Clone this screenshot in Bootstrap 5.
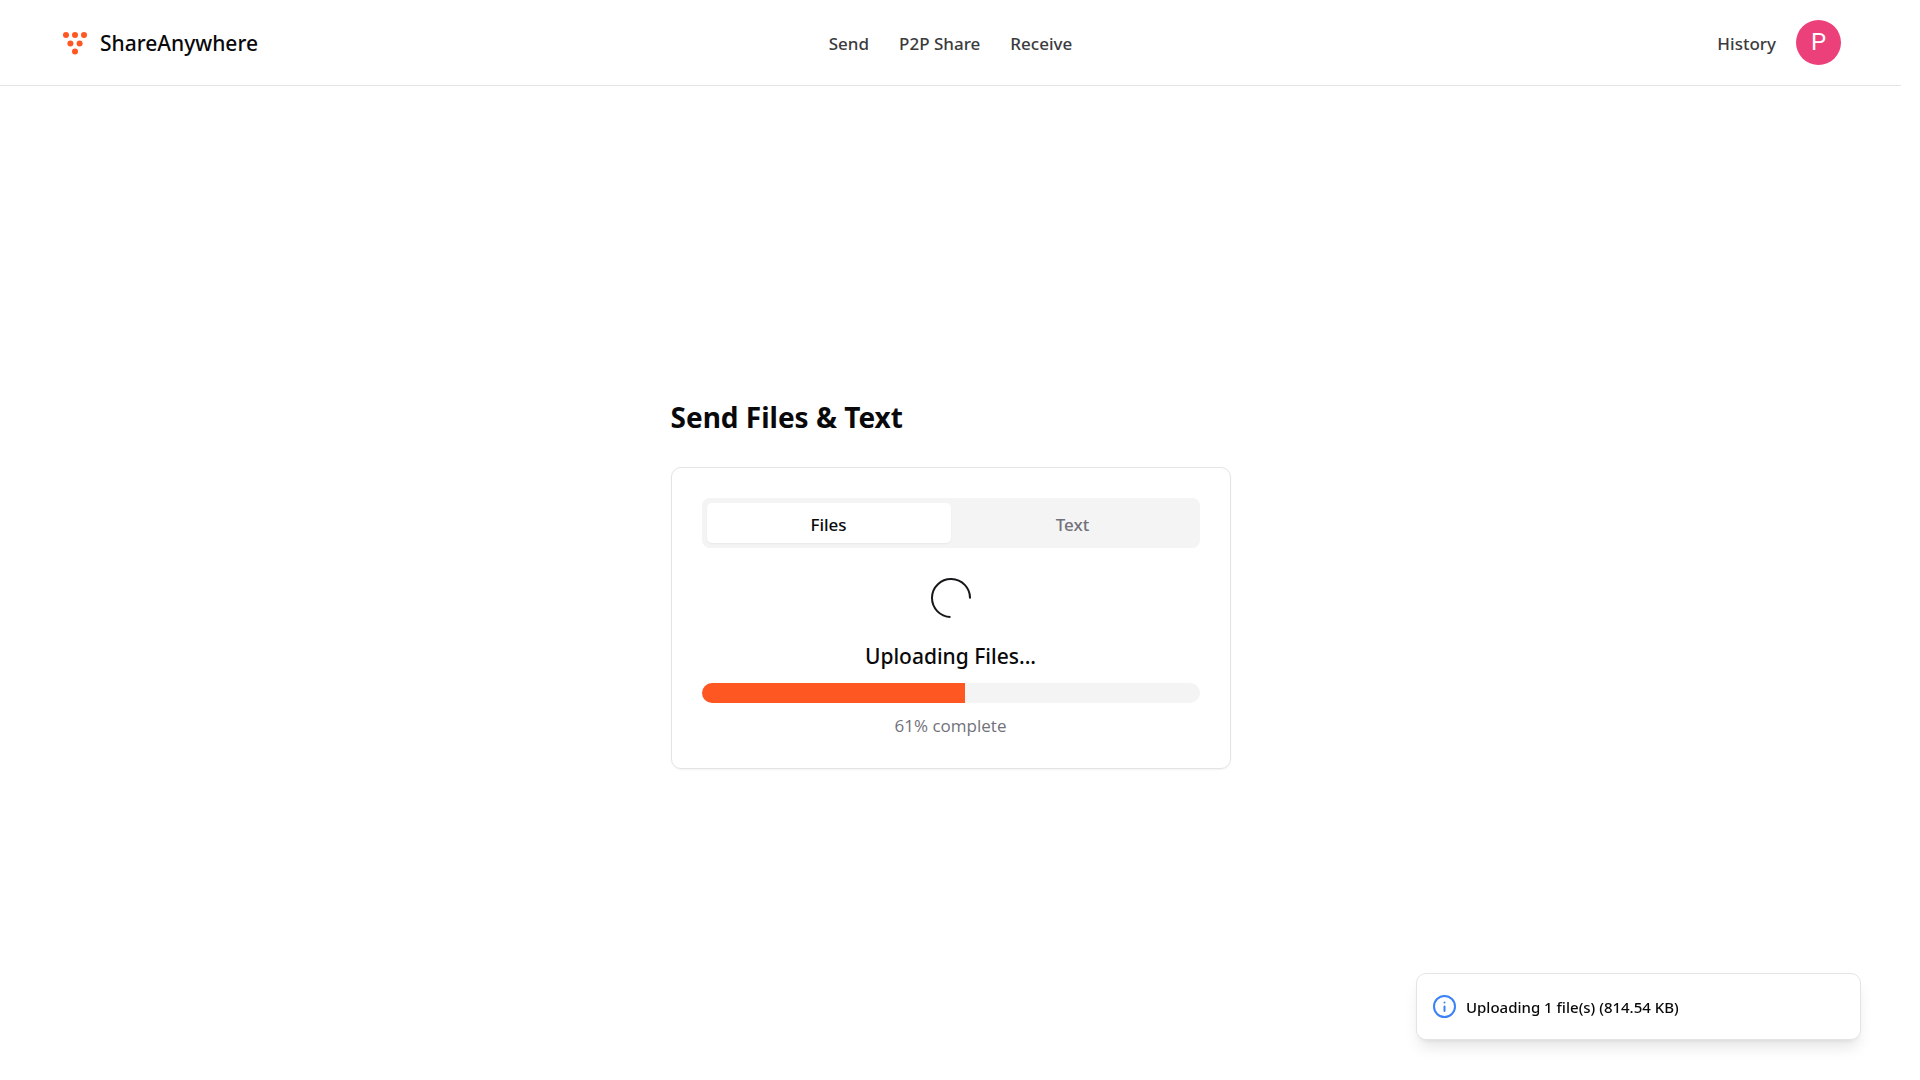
<!DOCTYPE html>
<html lang="en">
<head>
<meta charset="utf-8">
<meta name="viewport" content="width=device-width, initial-scale=1">
<title>ShareAnywhere</title>
<link href="https://cdn.jsdelivr.net/npm/bootstrap@5.3.0/dist/css/bootstrap.min.css" rel="stylesheet">
<style>
  body { font-family: "Noto Sans", "Open Sans", sans-serif; font-size: 17px; line-height: 25px; color: #09090b; background: #fff; padding-right: 19px; }
  .site-header { min-height: 86px; padding: 0 60px; border-bottom: 1px solid #e4e4e7; }
  .side { flex: 1 1 0; }
  .brand { gap: 13px; color: #09090b; font-size: 21px; font-weight: 500; text-decoration: none; }
  .brand-name { padding-top: 2px; }
  .menu { gap: 30px; }
  .menu-link { color: #3b3b3e; font-weight: 500; text-decoration: none; padding-top: 2px; }
  .avatar { width: 45px; height: 45px; border: 0; border-radius: 50%; padding: 0; background: #ec407a; color: #fff; font-family: Roboto, sans-serif; font-size: 24px; }
  .panel { width: 100%; max-width: 560px; }
  .page-title { font-size: 28px; line-height: 40px; font-weight: 700; margin-bottom: 30px; }
  .upload-card { border: 1px solid #e4e4e7; border-radius: 10px; padding: 30px; box-shadow: 0 1px 2px rgba(0,0,0,.05); }
  .tab-list { background: #f4f4f5; border-radius: 8px; padding: 5px; margin-bottom: 30px; }
  .tab-btn { height: 40px; border: 0; border-radius: 5px; background: none; color: #71717a; font-weight: 500; padding: 2px 0 0; }
  .tab-btn.active { background: #fff; color: #09090b; box-shadow: 0 1px 2px rgba(0,0,0,.05); }
  .status-title { font-size: 21px; line-height: 35px; font-weight: 500; margin: 21px 0 9px; }
  .upload-bar { height: 20px; border-radius: 10px; background: #f4f4f5; margin-bottom: 10px; }
  .upload-bar .progress-bar { background: #ff5722; }
  .status-note { font-family: "Open Sans", sans-serif; color: #71717a; }
  .notice { width: 445px; right: 59px; bottom: 40px; min-height: 67px; padding: 0 16px; gap: 10px; background: #fff; border: 1px solid #e4e4e7; border-radius: 10px; box-shadow: 0 10px 15px -3px rgba(0,0,0,.1), 0 4px 6px -4px rgba(0,0,0,.1); }
  .notice-text { font-size: 15px; font-weight: 500; padding-top: 2px; }
</style>
<script src="https://cdn.jsdelivr.net/npm/bootstrap@5.3.0/dist/js/bootstrap.bundle.min.js"></script>
</head>
<body class="min-vh-100 d-flex flex-column">
<header class="site-header d-flex align-items-center">
  <div class="side d-flex">
    <a class="brand d-flex align-items-center" href="#">
      <svg width="27" height="30" viewBox="0 0 27 30" fill="#ff5722" aria-hidden="true">
        <circle cx="6" cy="7" r="3"/><circle cx="15" cy="7" r="3"/><circle cx="24" cy="7" r="3"/>
        <circle cx="10.4" cy="15.5" r="3"/><circle cx="19.6" cy="15.5" r="3"/><circle cx="15" cy="23.5" r="3"/>
      </svg>
      <span class="brand-name">ShareAnywhere</span>
    </a>
  </div>
  <nav class="menu d-flex" aria-label="Main">
    <a class="menu-link" href="#">Send</a>
    <a class="menu-link" href="#">P2P Share</a>
    <a class="menu-link" href="#">Receive</a>
  </nav>
  <div class="side d-flex align-items-center justify-content-end">
    <a class="menu-link me-3" href="#">History</a>
    <button class="avatar ms-1" type="button" aria-label="Account">P</button>
  </div>
</header>
<main class="flex-grow-1 d-flex align-items-center justify-content-center">
  <div class="panel">
    <h1 class="page-title">Send Files &amp; Text</h1>
    <section class="upload-card">
      <div class="tab-list d-flex" role="tablist">
        <button class="tab-btn active flex-fill w-50" type="button" role="tab" aria-selected="true">Files</button>
        <button class="tab-btn flex-fill w-50" type="button" role="tab" aria-selected="false">Text</button>
      </div>
      <div class="text-center">
        <svg class="d-block mx-auto" width="40" height="40" viewBox="0 0 40 40" fill="none" stroke="#18181b" stroke-width="2" aria-hidden="true"><path d="M19.5 39A19 19 0 1 1 39 20.500"/></svg>
        <h2 class="status-title">Uploading Files...</h2>
        <div class="upload-bar progress" role="progressbar" aria-label="Upload progress" aria-valuenow="61" aria-valuemin="0" aria-valuemax="100">
          <div class="progress-bar" style="width: 53%"></div>
        </div>
        <p class="status-note mb-0">61% complete</p>
      </div>
    </section>
  </div>
</main>
<div class="notice position-fixed d-flex align-items-center" role="status">
  <svg width="23" height="23" viewBox="0 0 23 23" fill="none" stroke="#3b82f6" stroke-width="2" stroke-linecap="round" aria-hidden="true"><circle cx="11.500" cy="11.500" r="10.500"/><path d="M11.500 11.500v4.500M11.500 7.500v.01"/></svg>
  <span class="notice-text">Uploading 1 file(s) (814.54 KB)</span>
</div>
</body>
</html>
